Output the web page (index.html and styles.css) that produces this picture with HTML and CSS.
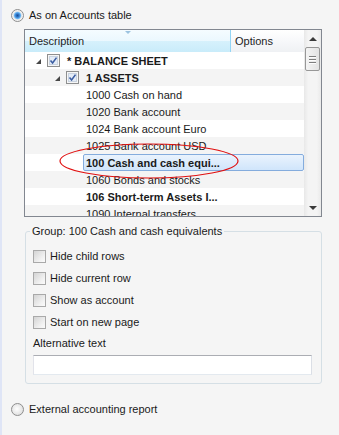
FILE: index.html
```html
<!DOCTYPE html>
<html lang="en">
<head>
  <meta charset="UTF-8">
  <title>Group options</title>
  <link rel="stylesheet" href="styles.css">
</head>
<body>
  <div class="panel">
    <label class="opt first"><span class="radio on"></span>As on Accounts table</label>

    <div class="tree">
      <div class="tree-main">
        <div class="thead">
          <div class="th sorted">Description</div>
          <div class="th opts">Options</div>
        </div>
        <div class="rows">
          <div class="row l0"><span class="exp"></span><svg class="tick" viewBox="0 0 13 13"><rect x="0.5" y="0.5" width="12" height="12" fill="#f6f6f6" stroke="#8e8f8f"/><rect x="2.5" y="2.5" width="8" height="8" fill="#e4ecf7" stroke="#c9d3e0"/><path d="M3.5 6.5 L5.6 9 L9.5 3.6" fill="none" stroke="#3c5ea3" stroke-width="1.6"/></svg><span class="txt b">* BALANCE SHEET</span></div>
          <div class="row l1"><span class="exp"></span><svg class="tick" viewBox="0 0 13 13"><rect x="0.5" y="0.5" width="12" height="12" fill="#f6f6f6" stroke="#8e8f8f"/><rect x="2.5" y="2.5" width="8" height="8" fill="#e4ecf7" stroke="#c9d3e0"/><path d="M3.5 6.5 L5.6 9 L9.5 3.6" fill="none" stroke="#3c5ea3" stroke-width="1.6"/></svg><span class="txt b">1 ASSETS</span></div>
          <div class="row l2"><span class="txt">1000 Cash on hand</span></div>
          <div class="row l2"><span class="txt">1020 Bank account</span></div>
          <div class="row l2"><span class="txt">1024 Bank account Euro</span></div>
          <div class="row l2"><span class="txt">1025 Bank account USD</span></div>
          <div class="row l2 sel"><span class="txt b">100 Cash and cash equi...</span></div>
          <div class="row l2"><span class="txt">1060 Bonds and stocks</span></div>
          <div class="row l2"><span class="txt b">106 Short-term Assets I...</span></div>
          <div class="row l2"><span class="txt">1090 Internal transfers</span></div>
        </div>
      </div>
      <div class="vscroll">
        <span class="arr up"></span>
        <span class="thumb"><i></i><i></i><i></i></span>
        <span class="track"></span>
        <span class="arr down"></span>
      </div>
      <svg class="mark" width="190" height="46" viewBox="0 0 190 46"><ellipse cx="94" cy="23" rx="89" ry="17" fill="none" stroke="#e01010" stroke-width="1.2"/></svg>
    </div>

    <fieldset class="group">
      <legend>Group: 100 Cash and cash equivalents</legend>
      <label class="check"><span class="box"></span>Hide child rows</label>
      <label class="check"><span class="box"></span>Hide current row</label>
      <label class="check"><span class="box"></span>Show as account</label>
      <label class="check"><span class="box"></span>Start on new page</label>
      <div class="alt-label">Alternative text</div>
      <div class="alt-input"></div>
    </fieldset>

    <label class="opt second"><span class="radio"></span>External accounting report</label>
  </div>
</body>
</html>
```

FILE: styles.css
```css
* {
  box-sizing: border-box;
}
body {
  margin: 0;
  background: #f5f5f5;
  font: 11px "Liberation Sans", Arial, sans-serif;
  color: #1a1a1a;
}
.panel {
  border-left: 2px solid #dfe5f6;
  min-height: 435px;
  padding-top: 8px;
}
.opt {
  display: flex;
  align-items: center;
  gap: 5px;
  height: 14px;
  margin-left: 9px;
}
.opt.second {
  margin-top: 18px;
}
.radio {
  flex: none;
  width: 13px;
  height: 13px;
  border-radius: 50%;
  border: 1px solid #8e8e8e;
  background: radial-gradient(circle at 45% 45%, #ffffff, #e2e2e2 70%, #d0d0d0);
}
.radio.on {
  background: radial-gradient(circle at 50% 50%, #1c4f95 0, #2f74c4 1.5px, #62aef0 3px, #9fd0f5 3.6px, #e8e8e8 4.2px, #f7f7f7 5.5px);
}

/* tree list */
.tree {
  position: relative;
  display: flex;
  margin: 7px 0 0 22px;
  width: 298px;
  height: 188px;
  border: 1px solid #828790;
  background: #fff;
}
.tree-main {
  flex: 1;
  min-width: 0;
  display: flex;
  flex-direction: column;
}
.thead {
  display: flex;
  height: 22px;
}
.th {
  padding-left: 4px;
  line-height: 22px;
  color: #1e1e1e;
}
.th.sorted {
  position: relative;
  width: 206px;
  border-right: 1px solid #93d5f5;
  background: linear-gradient(#f5fcff, #ebf8fe 50%, #d6f1fc 51%, #c9ecfa);
}
.th.sorted::after {
  content: "";
  position: absolute;
  left: 100px;
  top: 1px;
  border-left: 3px solid transparent;
  border-right: 3px solid transparent;
  border-top: 3px solid #9cc3e0;
}
.th.opts {
  flex: 1;
  background: linear-gradient(#ffffff, #f7f8fa 50%, #eff1f4);
}
.rows {
  flex: 1;
  overflow: hidden;
}
.row {
  display: flex;
  align-items: center;
  height: 17px;
  white-space: nowrap;
}
.row:nth-child(even) {
  background: #f4f4f4;
}
.l0 { padding-left: 11px; }
.l1 { padding-left: 30px; }
.l2 { padding-left: 61px; }
.exp {
  width: 0;
  height: 0;
  margin: 2px 6px 0 0;
  border-left: 5px solid transparent;
  border-bottom: 5px solid #474747;
}
.tick {
  flex: none;
  width: 13px;
  height: 13px;
  margin-right: 7px;
}
.b {
  font-weight: bold;
}
.sel .txt {
  flex: 1;
  align-self: stretch;
  display: flex;
  align-items: center;
  margin-left: -3px;
  padding-left: 2px;
  border: 1px solid #84acdd;
  border-radius: 2px;
  background: linear-gradient(#eaf3fd, #d0e5fb);
}

/* scrollbar */
.vscroll {
  width: 17px;
  display: flex;
  flex-direction: column;
  align-items: center;
  background: linear-gradient(90deg, #e8e8e8, #f4f4f4 25%, #f4f4f4 75%, #eaeaea);
}
.arr {
  height: 17px;
  width: 100%;
  display: flex;
  align-items: center;
  justify-content: center;
}
.arr::before {
  content: "";
  border-left: 4px solid transparent;
  border-right: 4px solid transparent;
}
.arr.up::before {
  border-bottom: 4px solid #3a3a3a;
}
.arr.down::before {
  border-top: 4px solid #3a3a3a;
}
.thumb {
  width: 15px;
  height: 24px;
  display: flex;
  flex-direction: column;
  align-items: center;
  justify-content: center;
  gap: 2px;
  border: 1px solid #979797;
  border-radius: 2px;
  background: linear-gradient(90deg, #f4f4f4, #e3e3e3);
}
.thumb i {
  width: 7px;
  height: 1px;
  background: #7e7e7e;
  box-shadow: 0 1px #fdfdfd;
}
.track {
  flex: 1;
}
.mark {
  position: absolute;
  left: 30px;
  top: 108px;
}

/* group box */
.group {
  margin: 7px 0 0 23px;
  width: 297px;
  min-width: 0;
  padding: 7px 9px 8px 7px;
  border: 1px solid #d5dfe5;
  border-radius: 3px;
}
.group legend {
  margin-left: -3px;
  padding: 0 2px;
  line-height: 14px;
}
.check {
  display: flex;
  align-items: center;
  gap: 4px;
  height: 22px;
}
.box {
  flex: none;
  width: 13px;
  height: 13px;
  border: 1px solid #a9a9a9;
  background: linear-gradient(135deg, #d4d4d4, #f2f2f2 70%, #fbfbfb);
}
.alt-label {
  margin-top: 3px;
  line-height: 14px;
}
.alt-input {
  margin-top: 5px;
  width: 279px;
  height: 20px;
  border: 1px solid;
  border-color: #abadb3 #dbdfe6 #e3e9ef #e2e3ea;
  background: #fff;
}
```
